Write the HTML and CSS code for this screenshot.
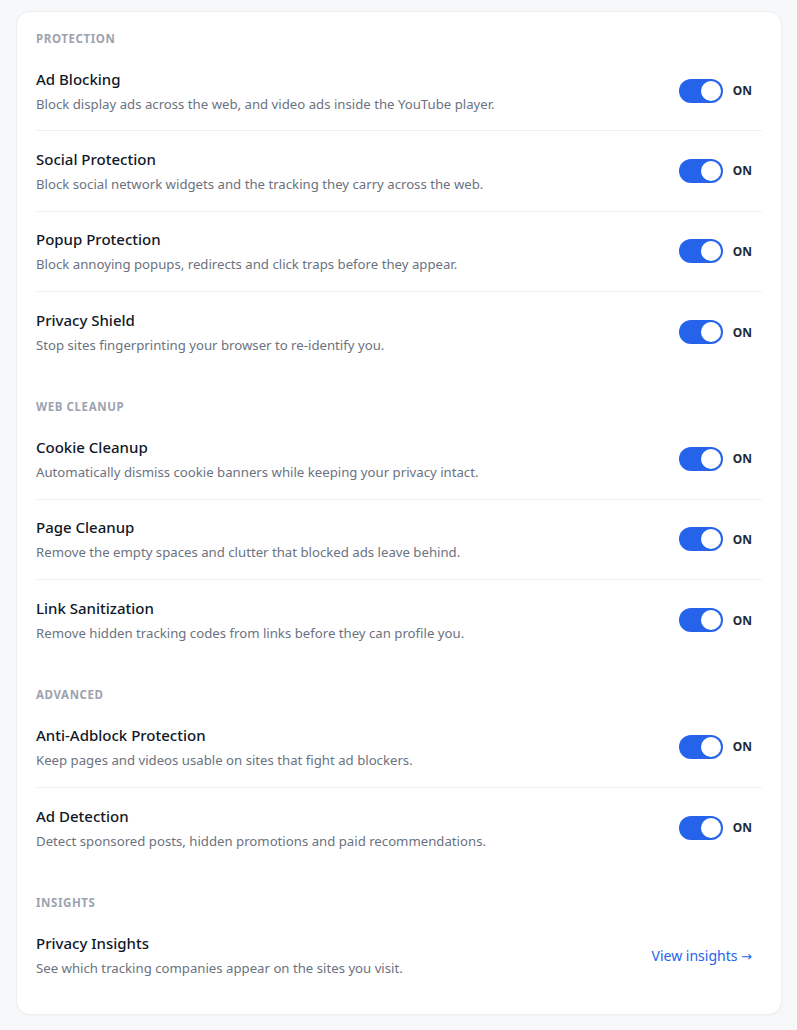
FILE: index.html
```html
<!DOCTYPE html>
<html lang="en">
<head>
    <meta charset="UTF-8">
    <meta name="viewport" content="width=device-width, initial-scale=1.0">
    <title>Settings</title>
    <link rel="stylesheet" href="styles.css">
</head>
<body>
    <div class="card">
        <div class="section">
            <h3 class="sectionTitle">Protection</h3>
            <div class="row">
                <div class="info">
                    <div class="rowTitle">Ad Blocking</div>
                    <div class="rowDesc">Block display ads across the web, and video ads inside the YouTube player.</div>
                </div>
                <label class="control"><span class="switch"><span class="knob"></span></span><span class="state">ON</span></label>
            </div>
            <div class="row">
                <div class="info">
                    <div class="rowTitle">Social Protection</div>
                    <div class="rowDesc">Block social network widgets and the tracking they carry across the web.</div>
                </div>
                <label class="control"><span class="switch"><span class="knob"></span></span><span class="state">ON</span></label>
            </div>
            <div class="row">
                <div class="info">
                    <div class="rowTitle">Popup Protection</div>
                    <div class="rowDesc">Block annoying popups, redirects and click traps before they appear.</div>
                </div>
                <label class="control"><span class="switch"><span class="knob"></span></span><span class="state">ON</span></label>
            </div>
            <div class="row">
                <div class="info">
                    <div class="rowTitle">Privacy Shield</div>
                    <div class="rowDesc">Stop sites fingerprinting your browser to re-identify you.</div>
                </div>
                <label class="control"><span class="switch"><span class="knob"></span></span><span class="state">ON</span></label>
            </div>
        </div>

        <div class="section">
            <h3 class="sectionTitle">Web Cleanup</h3>
            <div class="row">
                <div class="info">
                    <div class="rowTitle">Cookie Cleanup</div>
                    <div class="rowDesc">Automatically dismiss cookie banners while keeping your privacy intact.</div>
                </div>
                <label class="control"><span class="switch"><span class="knob"></span></span><span class="state">ON</span></label>
            </div>
            <div class="row">
                <div class="info">
                    <div class="rowTitle">Page Cleanup</div>
                    <div class="rowDesc">Remove the empty spaces and clutter that blocked ads leave behind.</div>
                </div>
                <label class="control"><span class="switch"><span class="knob"></span></span><span class="state">ON</span></label>
            </div>
            <div class="row">
                <div class="info">
                    <div class="rowTitle">Link Sanitization</div>
                    <div class="rowDesc">Remove hidden tracking codes from links before they can profile you.</div>
                </div>
                <label class="control"><span class="switch"><span class="knob"></span></span><span class="state">ON</span></label>
            </div>
        </div>

        <div class="section">
            <h3 class="sectionTitle">Advanced</h3>
            <div class="row">
                <div class="info">
                    <div class="rowTitle">Anti-Adblock Protection</div>
                    <div class="rowDesc">Keep pages and videos usable on sites that fight ad blockers.</div>
                </div>
                <label class="control"><span class="switch"><span class="knob"></span></span><span class="state">ON</span></label>
            </div>
            <div class="row">
                <div class="info">
                    <div class="rowTitle">Ad Detection</div>
                    <div class="rowDesc">Detect sponsored posts, hidden promotions and paid recommendations.</div>
                </div>
                <label class="control"><span class="switch"><span class="knob"></span></span><span class="state">ON</span></label>
            </div>
        </div>

        <div class="section">
            <h3 class="sectionTitle">Insights</h3>
            <div class="row">
                <div class="info">
                    <div class="rowTitle">Privacy Insights</div>
                    <div class="rowDesc">See which tracking companies appear on the sites you visit.</div>
                </div>
                <a class="link" href="#">View insights <span class="arrow">&rarr;</span></a>
            </div>
        </div>
    </div>
</body>
</html>
```

FILE: styles.css
```css
body {
    font-family: "Noto Sans", "Open Sans", sans-serif;
    margin: 0;
    padding: 11px 15px 16px 16px;
    background-color: #f7f8fa;
    color: #111827;
}
.card {
    background-color: #ffffff;
    border: 1px solid #eceef1;
    border-radius: 14px;
    padding: 19px;
    box-shadow: 0 1px 2px rgba(17, 24, 39, 0.03);
}
.section + .section {
    margin-top: 27px;
}
.sectionTitle {
    margin: 0 0 4px 0;
    font-size: 11.5px;
    line-height: 16px;
    font-weight: 700;
    letter-spacing: 0.6px;
    text-transform: uppercase;
    color: #9ca3af;
}
.row {
    display: flex;
    align-items: center;
    justify-content: space-between;
    height: 80.33px;
    box-sizing: border-box;
    border-bottom: 1px solid #f0f1f3;
}
.row:last-child {
    border-bottom: none;
}
.rowTitle {
    font-size: 15px;
    line-height: 20px;
    font-weight: 500;
    color: #111827;
}
.rowDesc {
    margin-top: 6px;
    font-size: 13.2px;
    line-height: 18px;
    color: #6b7280;
}
.control {
    display: flex;
    align-items: center;
    gap: 10px;
    margin-right: 10px;
    cursor: pointer;
}
.switch {
    display: flex;
    align-items: center;
    justify-content: flex-end;
    width: 44px;
    height: 24px;
    padding: 0 2px;
    box-sizing: border-box;
    border-radius: 12px;
    background-color: #2563eb;
}
.knob {
    width: 20px;
    height: 20px;
    border-radius: 50%;
    background-color: #ffffff;
}
.state {
    font-size: 12px;
    font-weight: 700;
    color: #1f2937;
}
.link {
    margin-right: 10px;
    font-size: 14px;
    color: #2563eb;
    text-decoration: none;
}
.arrow {
    font-family: "DejaVu Sans", sans-serif;
    font-size: 13px;
}
```
